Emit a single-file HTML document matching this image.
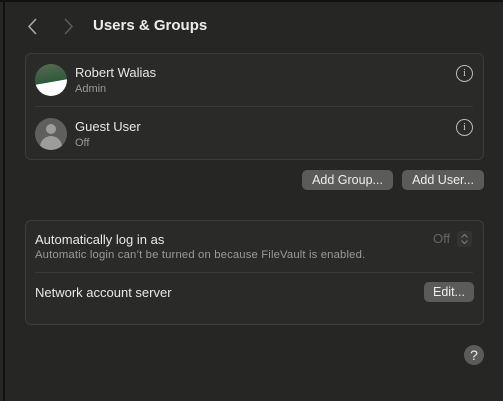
<!DOCTYPE html><html><head><style>
body{margin:0;width:503px;height:401px;background:#262625;font-family:"Liberation Sans",sans-serif;color:#e6e6e6;position:relative;overflow:hidden}
.a{position:absolute}
.panel{position:absolute;left:25px;width:457px;background:#2a2a29;border:1px solid #3c3c3b;border-radius:6px}
.t{font-size:13px;color:#e8e8e8}
.s{font-size:11px;color:#9a9a9a}
.btn{position:absolute;height:20px;background:#5b5b5a;border-radius:5px;font-size:12.5px;color:#eee;text-align:center;line-height:20px}
.info{position:absolute;width:15px;height:15px;border:1px solid #bbb;border-radius:50%;font-size:10px;color:#ccc;text-align:center;line-height:15px;font-family:"Liberation Serif",serif}
</style></head><body>
<div class="a" style="left:0;top:0;width:503px;height:2px;background:#111"></div>
<div class="a" style="left:3px;top:0;width:2px;height:401px;background:#111"></div>
<svg class="a" style="left:26px;top:17px" width="50" height="20"><path d="M10 2 L3 9.5 L10 17" stroke="#a8a8a8" stroke-width="1.6" fill="none"/><path d="M39 2 L46 9.5 L39 17" stroke="#5a5a5a" stroke-width="1.6" fill="none"/></svg>
<div class="a" style="left:93px;top:17px;font-size:15px;font-weight:bold;color:#ececec">Users &amp; Groups</div>
<div class="panel" style="top:53px;height:105px"></div>
<div class="a" style="left:35px;top:64px;width:32px;height:32px;border-radius:50%;background:linear-gradient(170deg,#5a6a55 0%,#2e5a3a 55%,#fff 56%)"></div>
<div class="a t" style="left:75px;top:65px">Robert Walias</div>
<div class="a s" style="left:75px;top:83px">Admin</div>
<div class="info" style="left:456px;top:65px">i</div>
<div class="a" style="left:35px;top:106px;width:438px;height:1px;background:#3a3a39"></div>
<div class="a" style="left:35px;top:118px;width:32px;height:32px;border-radius:50%;background:#5f5f5e;overflow:hidden"><div class="a" style="left:11px;top:6px;width:10px;height:10px;border-radius:50%;background:#9d9d9c"></div><div class="a" style="left:5px;top:18px;width:22px;height:14px;border-radius:11px 11px 0 0;background:#9d9d9c"></div></div>
<div class="a t" style="left:75px;top:119px">Guest User</div>
<div class="a s" style="left:75px;top:137px">Off</div>
<div class="info" style="left:456px;top:119px">i</div>
<div class="btn" style="left:302px;top:170px;width:91px">Add Group...</div>
<div class="btn" style="left:402px;top:170px;width:82px">Add User...</div>
<div class="panel" style="top:220px;height:103px"></div>
<div class="a t" style="left:35px;top:232px">Automatically log in as</div>
<div class="a s" style="left:35px;top:249px;font-size:11.3px;letter-spacing:0.15px">Automatic login can’t be turned on because FileVault is enabled.</div>
<div class="a" style="left:433px;top:231px;font-size:13px;color:#666">Off</div>
<div class="a" style="left:457px;top:231px;width:15px;height:16px;background:#333;border-radius:3px"><svg width="15" height="16"><path d="M4.5 6.5 L7.5 3.5 L10.5 6.5 M4.5 9.5 L7.5 12.5 L10.5 9.5" stroke="#777" stroke-width="1.2" fill="none"/></svg></div>
<div class="a" style="left:35px;top:272px;width:438px;height:1px;background:#3a3a39"></div>
<div class="a t" style="left:35px;top:285px">Network account server</div>
<div class="btn" style="left:424px;top:282px;width:50px">Edit...</div>
<div class="a" style="left:464px;top:345px;width:20px;height:20px;border-radius:50%;background:#5b5b5a;color:#eee;font-size:14px;text-align:center;line-height:20px">?</div>
</body></html>
